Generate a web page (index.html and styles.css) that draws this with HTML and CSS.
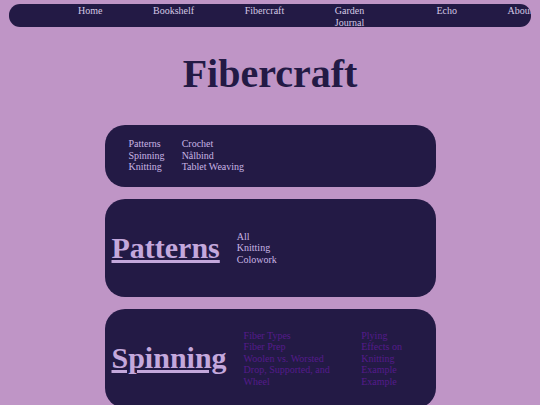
FILE: index.html
```html
<!DOCTYPE html>
<html>
<head>
<meta charset="utf-8">
<link rel="stylesheet" href="styles.css">
</head>
<body>
<nav class="nav">
  <ul class="nav-list">
    <li>Home</li>
    <li>Bookshelf</li>
    <li>Fibercraft</li>
    <li class="nav-wrap">Garden Journal</li>
    <li>Echo</li>
    <li>About</li>
  </ul>
</nav>
<h1 class="title">Fibercraft</h1>
<section class="card card-index">
  <ul class="list">
    <li>Patterns</li>
    <li>Spinning</li>
    <li>Knitting</li>
  </ul>
  <ul class="list">
    <li>Crochet</li>
    <li>Nålbind</li>
    <li>Tablet Weaving</li>
  </ul>
</section>
<section class="card">
  <h2 class="card-title"><a class="title-link">Patterns</a></h2>
  <ul class="list">
    <li>All</li>
    <li>Knitting</li>
    <li>Colowork</li>
  </ul>
</section>
<section class="card">
  <h2 class="card-title"><a class="title-link">Spinning</a></h2>
  <ul class="list links">
    <li>Fiber Types</li>
    <li>Fiber Prep</li>
    <li>Woolen vs. Worsted</li>
    <li>Drop, Supported, and Wheel</li>
  </ul>
  <ul class="list links">
    <li>Plying</li>
    <li>Effects on Knitting</li>
    <li>Example</li>
    <li>Example</li>
  </ul>
</section>
</body>
</html>
```
FILE: styles.css
```css
html, body {
  margin: 0;
  padding: 0;
}
body {
  background: #bf95c6;
  font-family: "Liberation Serif", "Times New Roman", serif;
  font-size: 10px;
  line-height: 1.15;
  padding: 4px 9px 0 9px;
  overflow: hidden;
  height: 405px;
  box-sizing: border-box;
}
.nav {
  background: #231a45;
  border-radius: 11px;
  overflow: hidden;
  height: 23px;
}
.nav-list {
  list-style: none;
  margin: 0;
  padding: 1px 0 0 69px;
  display: flex;
  gap: 50.6px;
  color: #d4c8e4;
  white-space: nowrap;
}
.nav-list li {
  flex: none;
}
.nav-list .nav-wrap {
  width: 51px;
  white-space: normal;
}
.title {
  margin: 23px 0 27px 0;
  text-align: center;
  font-size: 40px;
  font-weight: bold;
  color: #231a45;
  line-height: 48px;
}
.card {
  width: 331px;
  box-sizing: border-box;
  margin: 0 auto 12px auto;
  background: #231a45;
  border-radius: 20px;
  padding: 7px;
  display: flex;
  align-items: center;
  gap: 17px;
  color: #c8b4e4;
}
.card-index {
  padding: 13px 7px 14px 24px;
  align-items: flex-start;
}
.list {
  list-style: none;
  margin: 0;
  padding: 0;
}
.card-title {
  margin: 25px 0;
  font-size: 30px;
  line-height: 34.5px;
  flex: none;
}
.title-link {
  color: #c4a8dc;
  text-decoration: underline;
}
.links {
  color: #551a8b;
}
```
